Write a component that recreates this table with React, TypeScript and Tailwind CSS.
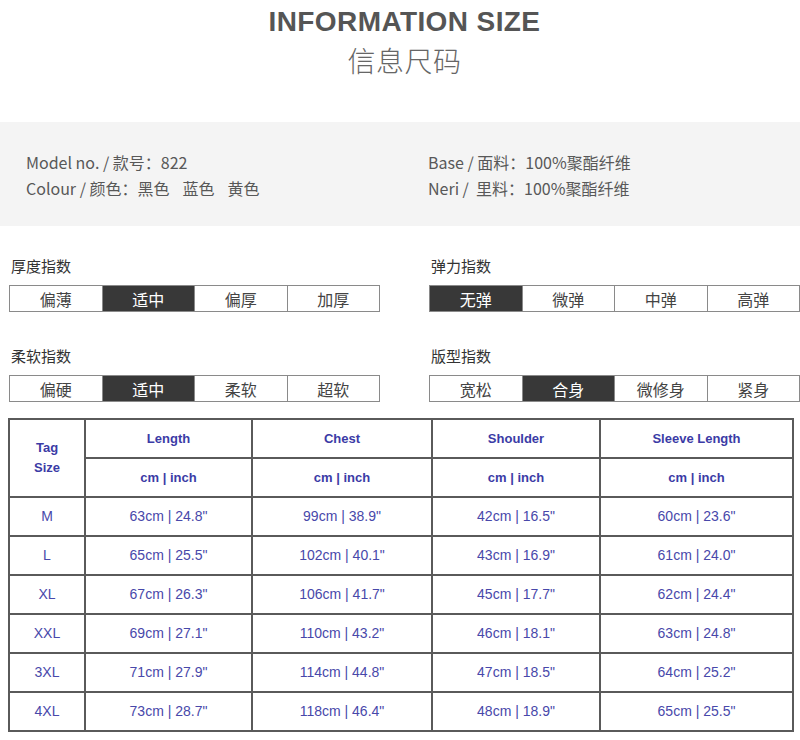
import React from "react";

const CJK = { fontFamily: '"Noto Sans CJK SC", "Noto Sans", sans-serif' };
const ARIAL = { fontFamily: '"Liberation Sans", Arial, sans-serif' };

function Scale({ label, items, active }: { label: string; items: string[]; active: number }) {
  return (
    <div className="flex flex-col">
      <div className="text-[15px] leading-[20px] text-[#333] pl-[2px] h-[20px]">{label}</div>
      <div className="mt-[9px] flex h-[27px] border border-[#8a8a8a]">
        {items.map((t, i) => (
          <div
            key={t}
            className={
              "flex-1 flex items-center justify-center text-[16px] leading-none " +
              (i > 0 ? "border-l border-[#8a8a8a] " : "") +
              (i === active ? "bg-[#383838] text-white" : "bg-white text-[#444]")
            }
          >
            {t}
          </div>
        ))}
      </div>
    </div>
  );
}

const rows = [
  ["M", "63cm | 24.8\"", "99cm | 38.9\"", "42cm | 16.5\"", "60cm | 23.6\""],
  ["L", "65cm | 25.5\"", "102cm | 40.1\"", "43cm | 16.9\"", "61cm | 24.0\""],
  ["XL", "67cm | 26.3\"", "106cm | 41.7\"", "45cm | 17.7\"", "62cm | 24.4\""],
  ["XXL", "69cm | 27.1\"", "110cm | 43.2\"", "46cm | 18.1\"", "63cm | 24.8\""],
  ["3XL", "71cm | 27.9\"", "114cm | 44.8\"", "47cm | 18.5\"", "64cm | 25.2\""],
  ["4XL", "73cm | 28.7\"", "118cm | 46.4\"", "48cm | 18.9\"", "65cm | 25.5\""],
];

export default function App() {
  const th = "border-2 border-[#5a5a5a] text-center font-bold text-[13px] text-[#3b3ba6] h-[39px] p-0";
  const td = "border-2 border-[#5a5a5a] text-center text-[14px] text-[#4848aa] h-[39px] p-0";
  return (
    <div className="w-[800px] h-[740px] bg-white overflow-hidden" style={CJK}>
      <div className="flex flex-col items-center pl-[9px] pt-[6px]">
        <div className="text-[28px] font-bold leading-[32px] text-[#555] tracking-[0.4px]" style={ARIAL}>
          INFORMATION SIZE
        </div>
        <div className="text-[28px] font-light leading-[36px] text-[#666] mt-[4px] tracking-[0.5px]">信息尺码</div>
      </div>

      <div className="mt-[44px] h-[104px] bg-[#f4f4f4] flex items-center pl-[26px] text-[16px] text-[#585858] leading-[26px]">
        <div className="w-[402px] pt-[1px]">
          <div>Model no. / 款号：822</div>
          <div className="flex">
            <span>Colour / 颜色：</span>
            <span>黑色</span>
            <span className="ml-[13px]">蓝色</span>
            <span className="ml-[13px]">黄色</span>
          </div>
        </div>
        <div className="pt-[1px]">
          <div>Base / 面料：100%聚酯纤维</div>
          <div>Neri /&nbsp;&nbsp;里料：100%聚酯纤维</div>
        </div>
      </div>

      <div className="grid grid-cols-[371px_371px] gap-x-[49px] gap-y-[34px] pl-[9px] mt-[30px]">
        <Scale label="厚度指数" items={["偏薄", "适中", "偏厚", "加厚"]} active={1} />
        <Scale label="弹力指数" items={["无弹", "微弹", "中弹", "高弹"]} active={0} />
        <Scale label="柔软指数" items={["偏硬", "适中", "柔软", "超软"]} active={1} />
        <Scale label="版型指数" items={["宽松", "合身", "微修身", "紧身"]} active={1} />
      </div>

      <div className="pl-[8px] mt-[16px]" style={ARIAL}>
        <table className="border-collapse border-2 border-[#333] w-[784px] table-fixed">
          <colgroup>
            <col className="w-[76px]" />
            <col className="w-[167px]" />
            <col className="w-[180px]" />
            <col className="w-[168px]" />
            <col className="w-[193px]" />
          </colgroup>
          <thead>
            <tr>
              <th rowSpan={2} className={th + " leading-[20px]"}>
                Tag
                <br />
                Size
              </th>
              <th className={th}>Length</th>
              <th className={th}>Chest</th>
              <th className={th}>Shoulder</th>
              <th className={th}>Sleeve Length</th>
            </tr>
            <tr>
              <th className={th}>cm | inch</th>
              <th className={th}>cm | inch</th>
              <th className={th}>cm | inch</th>
              <th className={th}>cm | inch</th>
            </tr>
          </thead>
          <tbody>
            {rows.map((r) => (
              <tr key={r[0]}>
                {r.map((c, i) => (
                  <td key={i} className={td}>
                    {c}
                  </td>
                ))}
              </tr>
            ))}
          </tbody>
        </table>
      </div>
    </div>
  );
}
